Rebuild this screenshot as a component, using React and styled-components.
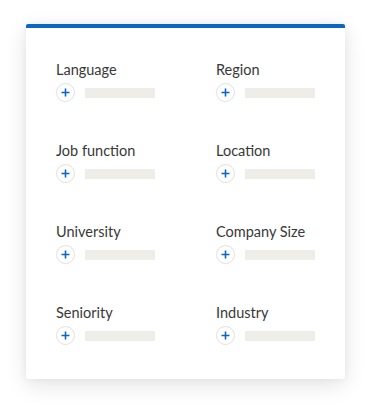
import React from "react";
import styled, { createGlobalStyle } from "styled-components";

const GlobalStyle = createGlobalStyle`
  html, body {
    margin: 0;
    background: #ffffff;
    font-family: Lato, "Open Sans", sans-serif;
  }
`;

const filters = ["Language", "Region", "Job function", "Location", "University", "Company Size", "Seniority", "Industry"];

const FilterCard = () => {
  return (
    <Page>
      <GlobalStyle />
      <Card>
        <Grid>
          {filters.map((name) => (
            <Filter key={name}>
              <Label>{name}</Label>
              <Row>
                <AddButton>
                  <svg width="9" height="9" viewBox="0 0 9 9">
                    <path d="M4.5 0.5v8M0.5 4.5h8" stroke="#0a66c2" strokeWidth="1.6" fill="none" />
                  </svg>
                </AddButton>
                <Placeholder />
              </Row>
            </Filter>
          ))}
        </Grid>
      </Card>
    </Page>
  );
};

const Page = styled.div`
  padding: 24px 0 26px 26px;
`;

const Card = styled.div`
  width: 319px;
  box-sizing: border-box;
  background: #ffffff;
  border-top: 4px solid #0a66c2;
  border-radius: 2px 2px 3px 3px;
  box-shadow: 0 6px 22px rgba(0, 0, 0, 0.11), 0 0 8px rgba(0, 0, 0, 0.05);
  padding: 33px 0 34px 30px;
`;

const Grid = styled.div`
  display: grid;
  grid-template-columns: 160px 1fr;
  row-gap: 40px;
`;

const Filter = styled.div`
  display: flex;
  flex-direction: column;
  gap: 4px;
`;

const Label = styled.div`
  font-size: 14.5px;
  line-height: 18px;
  color: #383838;
`;

const Row = styled.div`
  display: flex;
  align-items: center;
  gap: 10px;
`;

const AddButton = styled.div`
  width: 17px;
  height: 17px;
  border: 1px solid #e2e1dd;
  border-radius: 50%;
  background: #ffffff;
  display: flex;
  align-items: center;
  justify-content: center;
`;

const Placeholder = styled.div`
  width: 70px;
  height: 10px;
  background: #eeede8;
`;

export default FilterCard;
